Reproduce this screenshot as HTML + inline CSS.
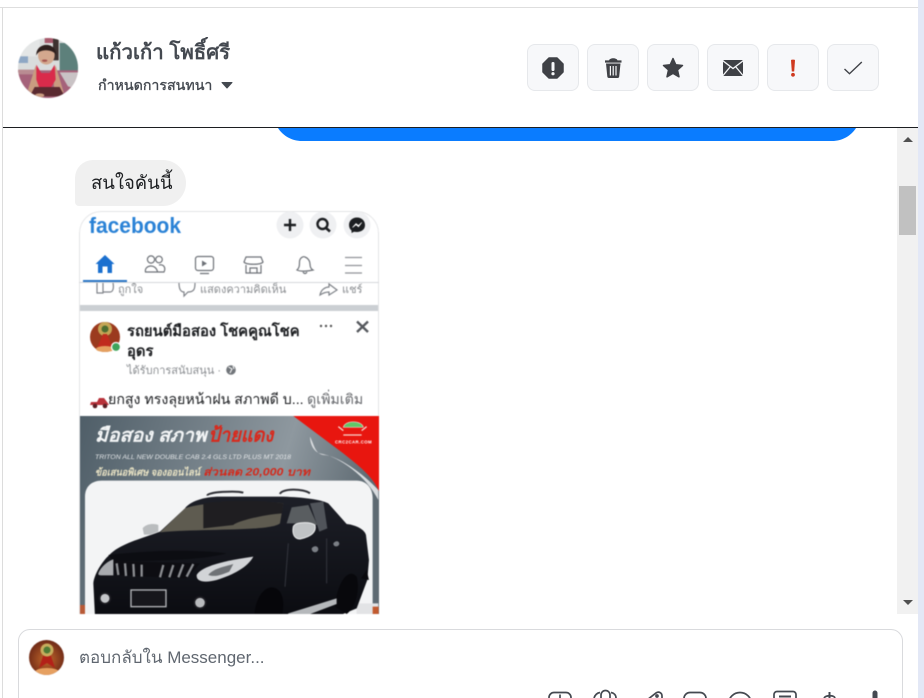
<!DOCTYPE html>
<html lang="th"><head><meta charset="utf-8"><title>Inbox</title>
<style>
html,body{margin:0;padding:0;width:924px;height:698px;overflow:hidden;background:#fff}
body{position:relative;font-family:"Liberation Sans","Noto Sans CJK SC",sans-serif}
.a{position:absolute}
.t{position:absolute;white-space:nowrap}
.btn{position:absolute;top:44px;width:50px;height:45px;border:1px solid #e6e8eb;border-radius:8px;background:#f7f8fa}
.btn svg{position:absolute;left:-1px;top:-1px;width:52px;height:47px}
</style></head><body>
<div class="a" style="left:0;top:7px;width:918px;height:1px;background:#dedede"></div>
<div class="a" style="left:2px;top:8px;width:1px;height:690px;background:#dcdcdc"></div>
<div class="a" style="left:918px;top:0;width:6px;height:698px;background:#e3e8f6"></div>
<svg class="a" style="left:18px;top:38px;filter:blur(.6px)" width="60" height="60" viewBox="0 0 60 60">
<defs><clipPath id="c1"><circle cx="30" cy="30" r="30"/></clipPath></defs>
<g clip-path="url(#c1)"><g transform="translate(-18.330,-8.330) scale(.3333)">
<rect x="50" y="20" width="190" height="190" fill="#d9dcdc"/>
<rect x="50" y="20" width="70" height="60" fill="#e4e6e6"/>
<path d="M180 40H240V130L180 125Z" fill="#5d807b"/>
<rect x="135" y="22" width="25" height="18" fill="#a85a6c"/>
<rect x="160" y="22" width="17" height="70" fill="#3e3230"/>
<rect x="55" y="80" width="30" height="20" fill="#8ea7c4"/>
<rect x="50" y="122" width="190" height="90" fill="#a5627a"/>
<path d="M180 128H240V180L205 170Z" fill="#c9c3c5"/>
<path d="M50 120H110V134H50Z" fill="#b98c92"/>
<path d="M108 108L85 180L100 198H125L115 130ZM168 108L192 188L165 200L160 130Z" fill="#c99c80"/>
<path d="M110 105L125 130H150L165 105L168 150L155 172H118L110 150Z" fill="#d92b4b"/>
<path d="M105 172H180L195 200H90Z" fill="#5a2a30"/>
<ellipse cx="120" cy="197" rx="14" ry="6" fill="#c99c80"/>
<ellipse cx="140" cy="76" rx="25" ry="29" fill="#d3a88e"/>
<path d="M110 78C107 38 170 32 170 78C163 58 117 55 110 78Z" fill="#2e201e"/>
<ellipse cx="135" cy="93" rx="8" ry="3.500" fill="#a4554f"/>
</g></g></svg>
<div class="t" style="left:96px;top:40px;font-size:20.400px;line-height:26px;font-weight:700;color:#444950">แก้วเก้า โพธิ์ศรี</div>
<div class="t" style="left:98px;top:76px;font-size:14.200px;line-height:20px;color:#444950;-webkit-text-stroke:.35px #444950">กำหนดการสนทนา</div>
<svg class="a" style="left:221px;top:82px" width="12" height="7"><path d="M1 .5H11L6 6Z" fill="#444950" stroke="#444950" stroke-linejoin="round"/></svg>

<div class="btn" style="left:527px"><svg viewBox="0 0 52 47"><path d="M22 14H30L36 20V28L30 34H22L16 28V20Z" fill="#3f4146" stroke="#3f4146" stroke-linejoin="round" stroke-width="1.500"/><rect x="24.500" y="18" width="3" height="9" rx="1.400" fill="#f7f8fa"/><circle cx="26" cy="29.700" r="1.600" fill="#f7f8fa"/></svg></div>
<div class="btn" style="left:587px"><svg viewBox="0 0 52 47"><path d="M18 17.500H34.500" stroke="#3f4146" stroke-width="2.200"/><path d="M22 16.500C22.500 13.500 30 13.500 30.500 16.500Z" fill="#3f4146"/><path d="M19 19.500H33.500L32.200 32.500C32.100 33.500 31.500 34 30.500 34H22C21 34 20.400 33.500 20.300 32.500Z" fill="#3f4146"/><path d="M23.400 22V31.500M26.200 22V31.500M29 22V31.500" stroke="#f7f8fa" stroke-width="1.200"/></svg></div>
<div class="btn" style="left:647px"><svg viewBox="0 0 52 47"><path d="M26 14.500L28.800 20.800L35.500 21.500L30.500 26L32 32.800L26 29.400L20 32.800L21.500 26L16.500 21.500L23.200 20.800Z" fill="#3f4146" stroke="#3f4146" stroke-width="1.500" stroke-linejoin="round"/></svg></div>
<div class="btn" style="left:707px"><svg viewBox="0 0 52 47"><rect x="16" y="16" width="20" height="16" rx="1" fill="#3f4146"/><path d="M15.500 16.500L26 24.500L36.500 16.500M16 31.500L23.500 22.500M36 31.500L28.500 22.500" stroke="#f7f8fa" stroke-width="1.300" fill="none"/></svg></div>
<div class="btn" style="left:767px"><svg viewBox="0 0 52 47"><path d="M24 16.200C24 15.500 28 15.500 28 16.200L27.200 27.500H24.800Z" fill="#cf3a20"/><circle cx="26" cy="30.800" r="1.900" fill="#cf3a20"/></svg></div>
<div class="btn" style="left:827px"><svg viewBox="0 0 52 47"><path d="M17.500 25L22.500 29.700L34.800 18" stroke="#3f4146" stroke-width="1.400" fill="none"/></svg></div>

<div class="a" style="left:3px;top:127px;width:915px;height:1px;background:#1c1e21"></div>
<svg class="a" style="left:270px;top:128px" width="600" height="14"><path d="M8 0C13 8 22 13 32 13H562C572 13 581 8 586 0Z" fill="#0a7cff"/></svg>

<div class="a" style="left:897px;top:128px;width:21px;height:486px;background:#f1f1f1"></div>
<div class="a" style="left:899px;top:186px;width:17px;height:49px;background:#c1c1c1"></div>
<svg class="a" style="left:903px;top:136px" width="10" height="6"><path d="M0 6H10L5 1Z" fill="#505050"/></svg>
<svg class="a" style="left:903px;top:600px" width="10" height="6"><path d="M0 0H10L5 5Z" fill="#505050"/></svg>

<div class="a" style="left:75px;top:160px;width:111px;height:46px;background:#f0f0f0;border-radius:18px 23px 23px 4px"></div>
<div class="t" style="left:91px;top:171px;font-size:18.500px;line-height:24px;color:#1c1e21">สนใจคันนี้</div>

<svg class="a" style="left:79px;top:211px;filter:blur(.4px)" width="300" height="403" viewBox="0 0 300 403">
<defs>
<clipPath id="sc"><path d="M0 403V22A22 22 0 0 1 22 0H278A22 22 0 0 1 300 22V403Z"/></clipPath>
<linearGradient id="gb" x1="0" y1="0" x2="1" y2=".2"><stop offset="0" stop-color="#4f5e68"/><stop offset=".7" stop-color="#8e989f"/><stop offset="1" stop-color="#5e6a72"/></linearGradient>
<linearGradient id="gc" x1="0" y1="0" x2="0" y2="1"><stop offset="0" stop-color="#1d1f27"/><stop offset="1" stop-color="#0b0c11"/></linearGradient>
</defs>
<g clip-path="url(#sc)" font-family="'Liberation Sans','Noto Sans CJK SC',sans-serif">
<rect width="300" height="403" fill="#fff"/>
<path d="M.5 403V22A21.500 21.500 0 0 1 22 .5H278A21.500 21.500 0 0 1 299.500 22V403" fill="none" stroke="#e3e4e6"/>
<text x="10" y="22" font-size="22" font-weight="700" fill="#2a82d6" textLength="92" lengthAdjust="spacingAndGlyphs">facebook</text>
<circle cx="211" cy="14" r="13.500" fill="#eff0f2"/><path d="M205 14H217M211 8V20" stroke="#1c1e21" stroke-width="2.400"/>
<circle cx="244" cy="14" r="13.500" fill="#eff0f2"/><circle cx="243.500" cy="13" r="5" fill="none" stroke="#1c1e21" stroke-width="2.400"/><path d="M247 17L251 20.500" stroke="#1c1e21" stroke-width="2.600"/>
<circle cx="278" cy="14" r="13.500" fill="#eff0f2"/><path d="M278 6.500C273 6.500 270 10 270 14C270 16.500 271 18.200 272.500 19.500V22L275 20.800C278 21.500 286 21 286 14C286 10 283 6.500 278 6.500Z" fill="#1c1e21"/><path d="M273.500 16.500L277 12.500L279.500 14.500L282.800 11.500L279.500 15.800L277 13.800Z" fill="#fff" stroke="#fff" stroke-width=".6"/>
<path d="M16.500 53L26 44L35.500 53H33V62H28.500V55.500H23.500V62H19V53Z" fill="#1b70cf"/>
<g fill="none" stroke="#6e7278" stroke-width="1.200">
<circle cx="72" cy="48.500" r="3.600"/><circle cx="80" cy="48.500" r="3.300"/><path d="M66.500 61C65 54 77 52 78.500 61ZM80 54C85 53 87 57 85 61H78.500"/>
<rect x="116.500" y="45.500" width="18" height="14" rx="2.500"/><path d="M121 62.500H130"/><path d="M123 49.500L128 52.500L123 55.500Z" fill="#6e7278" stroke="none"/>
<path d="M167 46H182L184 51C182 54 167 54 165 51ZM167 54V62H182V54M171 62V57H178V62"/>
<path d="M218 59C220.500 57 220.500 54 220.500 51C220.500 47 224 45 226 46C229 47 231 50 231 53C231 56 232 58 234 59C230 60 222 61 218 59Z"/><path d="M224 61C225 63 227 63 228 61"/>
<path d="M266 46.500H283M266 54.500H283M266 62H283" stroke="#909397"/>
</g>
<rect x="0" y="71" width="300" height="1" fill="#d6d8db"/>
<rect x="4" y="69" width="44" height="2" fill="#2a75c5"/>
<g fill="#8a8d91" font-size="11">
<text x="39" y="82">ถูกใจ</text><text x="121" y="82">แสดงความคิดเห็น</text><text x="263" y="82">แชร์</text></g>
<g fill="none" stroke="#80848a" stroke-width="1.200"><path d="M18 72V82H24V72M24 81H31C34 81 35 77 34 72"/><path d="M100 72C100 80 103 81 105 81V85L109 81C115 81 116 78 116 72"/><path d="M241 84C242 78 247 76 250 76V73L258 79L250 84V81C247 81 244 82 241 84Z"/></g>
<rect x="1" y="94" width="298" height="6" fill="#cbcfd3"/>
<circle cx="26" cy="126" r="15" fill="#9b3a1e"/><circle cx="26" cy="118" r="7" fill="#c5a555"/><circle cx="26" cy="118" r="3.500" fill="#4e6e30"/><path d="M18 137L24 123H28L34 137Z" fill="#c02b1e"/><ellipse cx="26" cy="138" rx="9" ry="3" fill="#e5a060"/>
<circle cx="37" cy="136" r="4.500" fill="#3fa45b" stroke="#fff" stroke-width="1.300"/>
<text x="48" y="125" font-size="14.800" font-weight="700" fill="#1c1e21">รถยนต์มือสอง โชคคูณโชค</text>
<text x="48" y="145" font-size="14.800" font-weight="700" fill="#1c1e21">อุดร</text>
<text x="48" y="163" font-size="11" fill="#8a8d91">ได้รับการสนับสนุน ·</text>
<circle cx="152" cy="159" r="4.800" fill="#72767b"/><path d="M149.500 156L153 158L151 162M154 155L155 158" stroke="#fff" fill="none"/>
<circle cx="242" cy="115" r="1.200" fill="#555"/><circle cx="247" cy="115" r="1.200" fill="#555"/><circle cx="252" cy="115" r="1.200" fill="#555"/>
<path d="M278 110.500L289 121M289 110.500L278 121" stroke="#56595e" stroke-width="2.400"/>
<path d="M11 194L12 191L18 191L20 187H25L28 191L30 194Z" fill="#b8323a"/><circle cx="16" cy="195" r="2.300" fill="#5a2025"/><circle cx="26" cy="195" r="2.300" fill="#5a2025"/>
<text x="29" y="193" font-size="14.200" fill="#1c1e21">ยกสูง ทรงลุยหน้าฝน สภาพดี บ...</text>
<text x="228" y="193" font-size="14.200" fill="#65676b">ดูเพิ่มเติม</text>

<rect x="1" y="205" width="299" height="198" fill="url(#gb)"/>
<g transform="translate(1,199) scale(.3333)">
<path d="M640 18H900V250C880 200 840 170 790 130Z" fill="#e8160f"/>
<path d="M690 80C705 110 705 130 730 135C770 135 850 190 895 240V270C860 200 780 140 720 130C700 125 690 100 690 80Z" fill="#d9dcdf"/>
<path d="M790 52C795 30 845 30 850 52Z" fill="#5fc768" stroke="#f3d0c8" stroke-width="2"/>
<path d="M775 50L790 62M860 50L845 62M790 75H845" stroke="#f7d6ce" stroke-width="4"/>
<text x="765" y="100" font-size="13" font-weight="700" fill="#fff" textLength="110">CRC2CAR.COM</text>
<text x="45" y="95" font-size="56" font-weight="700" font-style="italic" fill="#f3f5f6" textLength="335" lengthAdjust="spacingAndGlyphs">มือสอง สภาพ</text>
<text x="385" y="95" font-size="58" font-weight="700" font-style="italic" fill="#d9291c" textLength="195" lengthAdjust="spacingAndGlyphs">ป้ายแดง</text>
<text x="45" y="147" font-size="20" font-style="italic" fill="#e2e5e7" textLength="588" lengthAdjust="spacingAndGlyphs">TRITON ALL NEW DOUBLE CAB 2.4 GLS LTD PLUS MT 2018</text>
<text x="45" y="197" font-size="30" font-weight="700" font-style="italic" fill="#e8e2c4" textLength="315" lengthAdjust="spacingAndGlyphs">ข้อเสนอพิเศษ จองออนไลน์</text>
<text x="370" y="197" font-size="32" font-weight="700" font-style="italic" fill="#d32a1c" textLength="320" lengthAdjust="spacingAndGlyphs">ส่วนลด 20,000 บาท</text>
</g>
<g transform="translate(-9,249) scale(.3333)">
<path d="M45 470V110C45 80 65 62 95 62H860C890 62 908 85 908 115V470Z" fill="#f3f4f5"/>
<path d="M860 430H925V470H860Z" fill="#e2e3e5"/>
<path d="M412 107C412 95 500 92 520 98M630 102C635 85 700 85 720 100" fill="none" stroke="#2e2f35" stroke-width="6"/>
<path d="M70 370C72 345 95 305 118 285C150 250 220 235 270 215L345 145C360 125 400 110 450 110H640C700 112 750 118 775 130L830 192C860 195 885 210 888 225L897 300L892 360L860 445L800 470H75Z" fill="url(#gc)"/>
<path d="M270 217L345 145C400 125 560 120 640 130L630 190C600 215 400 205 270 217Z" fill="#5e5b50"/>
<path d="M400 130C470 120 570 120 640 130L636 160C570 165 500 185 490 195L400 205Z" fill="#1f1e21"/>
<path d="M650 190L665 142L715 135L742 195L700 190Z" fill="#595d60"/>
<path d="M720 130L760 125L772 205L748 215Z" fill="#50545a"/>
<path d="M670 200C675 185 720 185 735 195C740 215 725 230 690 237C672 237 666 220 670 200Z" fill="#c0c3c5" stroke="#ecedee" stroke-width="3"/>
<path d="M218 205C228 190 255 190 265 195V215L240 224H222Z" fill="#b9bcbe"/>
<path d="M655 250L645 380M770 235L770 370" stroke="#33353d" stroke-width="3"/>
<path d="M725 265C733 255 745 258 745 268C743 280 725 280 725 265ZM790 250C798 240 808 243 808 252C806 262 790 262 790 250Z" fill="#7c8086"/>
<path d="M115 285C200 275 350 265 470 280C420 295 300 305 130 303Z" fill="#0c0d12"/>
<path d="M130 303L390 310L350 355L135 345Z" fill="#0d0d12"/>
<g stroke="#8b8d91" stroke-width="7"><path d="M140 310L145 345M165 310L168 348M190 312L192 350M215 314L215 350M280 315L270 352M310 315L298 352M340 313L325 352M370 312L350 350"/></g>
<path d="M380 345C390 325 440 305 550 290C535 320 490 345 440 360C410 368 378 368 380 345Z" fill="#d2d4d7"/>
<path d="M415 345C430 325 465 320 490 312L478 335C455 345 435 352 415 345Z" fill="#6f7276"/>
<path d="M85 340C92 320 115 302 130 298V346H95C88 346 84 345 85 340Z" fill="#a8aaae"/>
<rect x="183" y="390" width="105" height="50" fill="#17171c" stroke="#b5b7ba" stroke-width="4"/>
<circle cx="105" cy="415" r="16" fill="#c5c7ca" stroke="#1d1d22" stroke-width="5"/>
<circle cx="390" cy="428" r="17" fill="#b8babd" stroke="#1d1d22" stroke-width="5"/>
<path d="M553 470C555 400 600 360 630 395C645 420 640 450 635 470Z" fill="#06060a"/>
<path d="M795 440C800 370 835 320 860 350C870 385 860 440 830 462Z" fill="#08080c"/>
<path d="M655 460L800 415V432L700 470H650Z" fill="#b5b8bb"/>
<path d="M873 355L890 330L897 360Z" fill="#0a0a0e"/>
<rect x="30" y="435" width="15" height="40" fill="#b85a37"/><rect x="908" y="440" width="18" height="30" fill="#c25a2f"/>
</g>
</g></svg>

<div class="a" style="left:18px;top:629px;width:883px;height:80px;border:1px solid #d9dadd;border-radius:12px;background:#fff"></div>
<svg class="a" style="left:29px;top:640px;filter:blur(.4px)" width="35" height="35" viewBox="0 0 35 35">
<defs><clipPath id="c2"><circle cx="17.500" cy="17.500" r="17.500"/></clipPath><radialGradient id="rg" cx=".5" cy=".55" r=".65"><stop offset="0" stop-color="#c56a2c"/><stop offset="1" stop-color="#5d1c12"/></radialGradient></defs>
<g clip-path="url(#c2)"><rect width="35" height="35" fill="url(#rg)"/><path d="M10 28L15 13H21L26 28L18 23Z" fill="#b32118"/><ellipse cx="18" cy="32" rx="12" ry="4" fill="#e6a061"/><circle cx="18" cy="10" r="6.500" fill="#c7ac5d"/><circle cx="18" cy="10" r="3.500" fill="#4f7b35"/></g></svg>
<div class="t" style="left:79px;top:648px;font-size:17px;line-height:20px;color:#606770">ตอบกลับใน Messenger...</div>

<svg class="a" style="left:540px;top:680px" width="350" height="18" viewBox="0 0 350 18" fill="none" stroke="#444950" stroke-width="1.700">
<rect x="9" y="12.500" width="22" height="20" rx="5"/><path d="M20 14.500V18"/>
<path d="M54 18C55 15 57 13 60 12.500M71 12.500C74 13 76 15 76 18"/><rect x="61" y="10.500" width="9" height="12" rx="4.500"/>
<path d="M107 20L116 13C119 11 122 13 122 16V20"/><circle cx="117" cy="16" r="1"/>
<rect x="144" y="12.500" width="22" height="20" rx="6"/>
<circle cx="200" cy="24" r="11.500"/>
<rect x="234" y="11.500" width="22" height="20" rx="3"/><path d="M239 16.500H251" stroke-width="2"/>
<path d="M284 18C286 15 294 15 295 18"/><path d="M289.500 12V20" stroke-width="2"/>
<path d="M335 13V20" stroke-width="5" stroke-linecap="round"/>
</svg>
</body></html>
